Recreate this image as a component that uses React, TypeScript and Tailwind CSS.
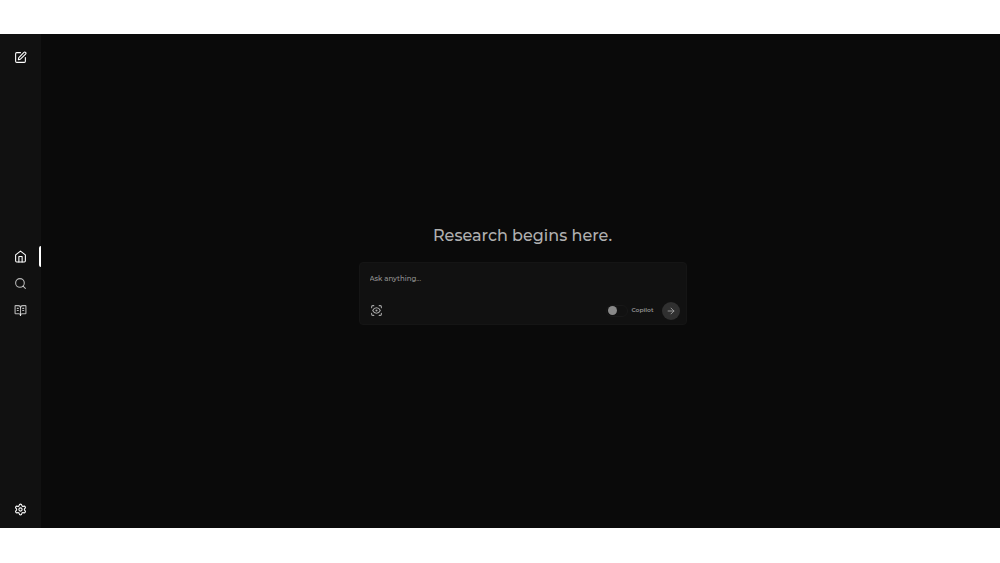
import { useState } from 'react';
import type { FormEvent } from 'react';
import { ArrowRight, BookOpenText, Search, Settings, SquarePen } from 'lucide-react';
import type { ComponentType } from 'react';

interface IconProps {
  className?: string;
}

interface NavLink {
  label: string;
  href: string;
  icon: ComponentType<IconProps>;
  active: boolean;
}

function HomeIcon({ className }: IconProps) {
  return (
    <svg
      viewBox="0 0 24 24"
      fill="none"
      stroke="currentColor"
      strokeWidth="2"
      strokeLinecap="round"
      strokeLinejoin="round"
      className={className}
    >
      <path d="m3 9 9-7 9 7v11a2 2 0 0 1-2 2H5a2 2 0 0 1-2-2z" />
      <polyline points="9 22 9 12 15 12 15 22" />
    </svg>
  );
}

function ScanEyeIcon({ className }: IconProps) {
  return (
    <svg
      viewBox="0 0 24 24"
      fill="none"
      stroke="currentColor"
      strokeWidth="2"
      strokeLinecap="round"
      strokeLinejoin="round"
      className={className}
    >
      <path d="M3 7V5a2 2 0 0 1 2-2h2" />
      <path d="M17 3h2a2 2 0 0 1 2 2v2" />
      <path d="M21 17v2a2 2 0 0 1-2 2h-2" />
      <path d="M7 21H5a2 2 0 0 1-2-2v-2" />
      <circle cx="12" cy="12" r="1" />
      <path d="M5 12s2.5-5 7-5 7 5 7 5-2.5 5-7 5-7-5-7-5" />
    </svg>
  );
}

const navLinks: NavLink[] = [
  { label: 'Home', href: '#home', icon: HomeIcon, active: true },
  { label: 'Discover', href: '#discover', icon: Search, active: false },
  { label: 'Library', href: '#library', icon: BookOpenText, active: false },
];

function Sidebar() {
  return (
    <aside className="flex w-[41px] shrink-0 flex-col items-center justify-between bg-[#111111] pt-[17px] pb-3 text-white">
      <a href="#new" aria-label="New chat" className="pr-px">
        <SquarePen className="size-[13px]" />
      </a>

      <nav className="flex w-full flex-col gap-1.5">
        {navLinks.map((link) => (
          <a
            key={link.label}
            href={link.href}
            aria-label={link.label}
            className={
              link.active
                ? 'relative flex h-[21px] items-center justify-center pr-px text-white'
                : 'relative flex h-[21px] items-center justify-center pr-px text-white/70'
            }
          >
            <link.icon className="size-[13px]" />
            {link.active && (
              <span className="absolute right-0 h-[21px] w-0.5 rounded-l-lg bg-white" />
            )}
          </a>
        ))}
      </nav>

      <button type="button" aria-label="Settings" className="pr-px">
        <Settings className="size-[13px]" />
      </button>
    </aside>
  );
}

function MessageInput() {
  const [message, setMessage] = useState('');
  const [copilot, setCopilot] = useState(false);

  const handleSubmit = (e: FormEvent) => {
    e.preventDefault();
    setMessage('');
  };

  return (
    <form
      onSubmit={handleSubmit}
      className="flex w-full flex-col rounded border border-[#151515] bg-[#111111] pt-2.5 pr-1.5 pb-1 pl-2.5"
    >
      <input
        type="text"
        aria-label="Message"
        value={message}
        onChange={(e) => setMessage(e.target.value)}
        placeholder="Ask anything..."
        className="h-3 w-full bg-transparent text-[7px] font-medium text-white outline-none placeholder:text-[#969696]"
      />
      <div className="mt-[17px] flex items-center justify-between">
        <button type="button" aria-label="Focus mode" className="text-[#a6a6a6]">
          <ScanEyeIcon className="size-[13px]" />
        </button>
        <div className="flex items-center gap-2">
          <label className="flex items-center gap-[3px] text-[6px] font-semibold text-[#949494]">
            <span className="relative flex h-3 w-[22px] items-center rounded-full border border-[#181818] bg-[#111111] px-px">
              <input
                type="checkbox"
                checked={copilot}
                onChange={(e) => setCopilot(e.target.checked)}
                className="peer absolute inset-0 opacity-0"
              />
              <span className="size-[9px] rounded-full bg-[#888888] peer-checked:translate-x-2.5 peer-checked:bg-sky-500" />
            </span>
            Copilot
          </label>
          <button
            type="submit"
            aria-label="Send"
            className="flex size-[18px] items-center justify-center rounded-full bg-[#303030] text-[#a8a8a8]"
          >
            <ArrowRight className="size-2.5" />
          </button>
        </div>
      </div>
    </form>
  );
}

export default function App() {
  return (
    <div className="flex min-h-screen flex-col bg-white pt-[34px] pb-[35px] font-['Montserrat','Inter',sans-serif]">
      <div className="flex flex-1 bg-[#0a0a0a]">
        <Sidebar />
        <main className="flex flex-1 flex-col items-center justify-center pr-4 pb-3 pl-5">
          <div className="flex w-full max-w-[328px] flex-col items-center gap-4">
            <h1 className="text-base leading-5 font-medium text-[#b0b0b0]">
              Research begins here.
            </h1>
            <MessageInput />
          </div>
        </main>
      </div>
    </div>
  );
}
